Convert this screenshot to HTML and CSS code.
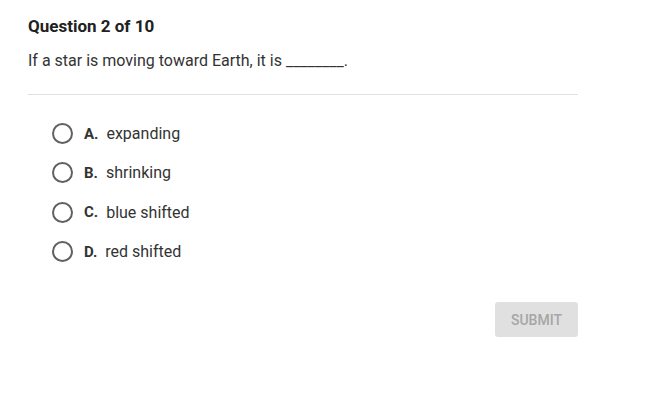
FILE: index.html
```html
<!DOCTYPE html>
<html lang="en">
<head>
  <meta charset="UTF-8">
  <title>Question 2 of 10</title>
  <link rel="stylesheet" href="styles.css">
</head>
<body>
  <div class="quiz">
    <h2 class="quiz-title">Question 2 of 10</h2>
    <p class="quiz-question">If a star is moving toward Earth, it is ________.</p>
    <hr class="quiz-divider">
    <ul class="options">
      <li class="option"><span class="radio"></span><span class="letter">A.</span><span class="answer">expanding</span></li>
      <li class="option"><span class="radio"></span><span class="letter">B.</span><span class="answer">shrinking</span></li>
      <li class="option"><span class="radio"></span><span class="letter">C.</span><span class="answer">blue shifted</span></li>
      <li class="option"><span class="radio"></span><span class="letter">D.</span><span class="answer">red shifted</span></li>
    </ul>
    <div class="actions">
      <button class="submit" disabled>SUBMIT</button>
    </div>
  </div>
</body>
</html>
```

FILE: styles.css
```css
html, body {
  margin: 0;
  background: #ffffff;
}

body {
  font-family: Roboto, "Liberation Sans", sans-serif;
  color: #212121;
}

.quiz {
  width: 550px;
  padding: 15px 0 0 28px;
}

.quiz-title {
  margin: 0;
  font-size: 17px;
  font-weight: 700;
  line-height: 22px;
}

.quiz-question {
  margin: 14px 0 0;
  font-size: 16px;
  line-height: 20px;
  color: #333333;
}

.quiz-divider {
  margin: 23px 0 0;
  border: none;
  border-top: 1px solid #e0e0e0;
}

.options {
  list-style: none;
  margin: 0;
  padding: 19px 0 0 24px;
}

.option {
  display: flex;
  align-items: center;
  height: 39.3px;
  font-size: 16px;
}

.radio {
  width: 17px;
  height: 17px;
  border: 2px solid #616161;
  border-radius: 50%;
  margin-right: 11px;
}

.letter {
  font-weight: 700;
  font-size: 15px;
  color: #333333;
  margin-right: 8px;
}

.answer {
  color: #333333;
}

.actions {
  display: flex;
  justify-content: flex-end;
  margin-top: 31px;
}

.submit {
  width: 83px;
  height: 35px;
  border: none;
  border-radius: 3px;
  background: #e0e0e0;
  color: #a6a6a6;
  font-family: Roboto, "Liberation Sans", sans-serif;
  font-size: 14px;
  font-weight: 500;
}
```
